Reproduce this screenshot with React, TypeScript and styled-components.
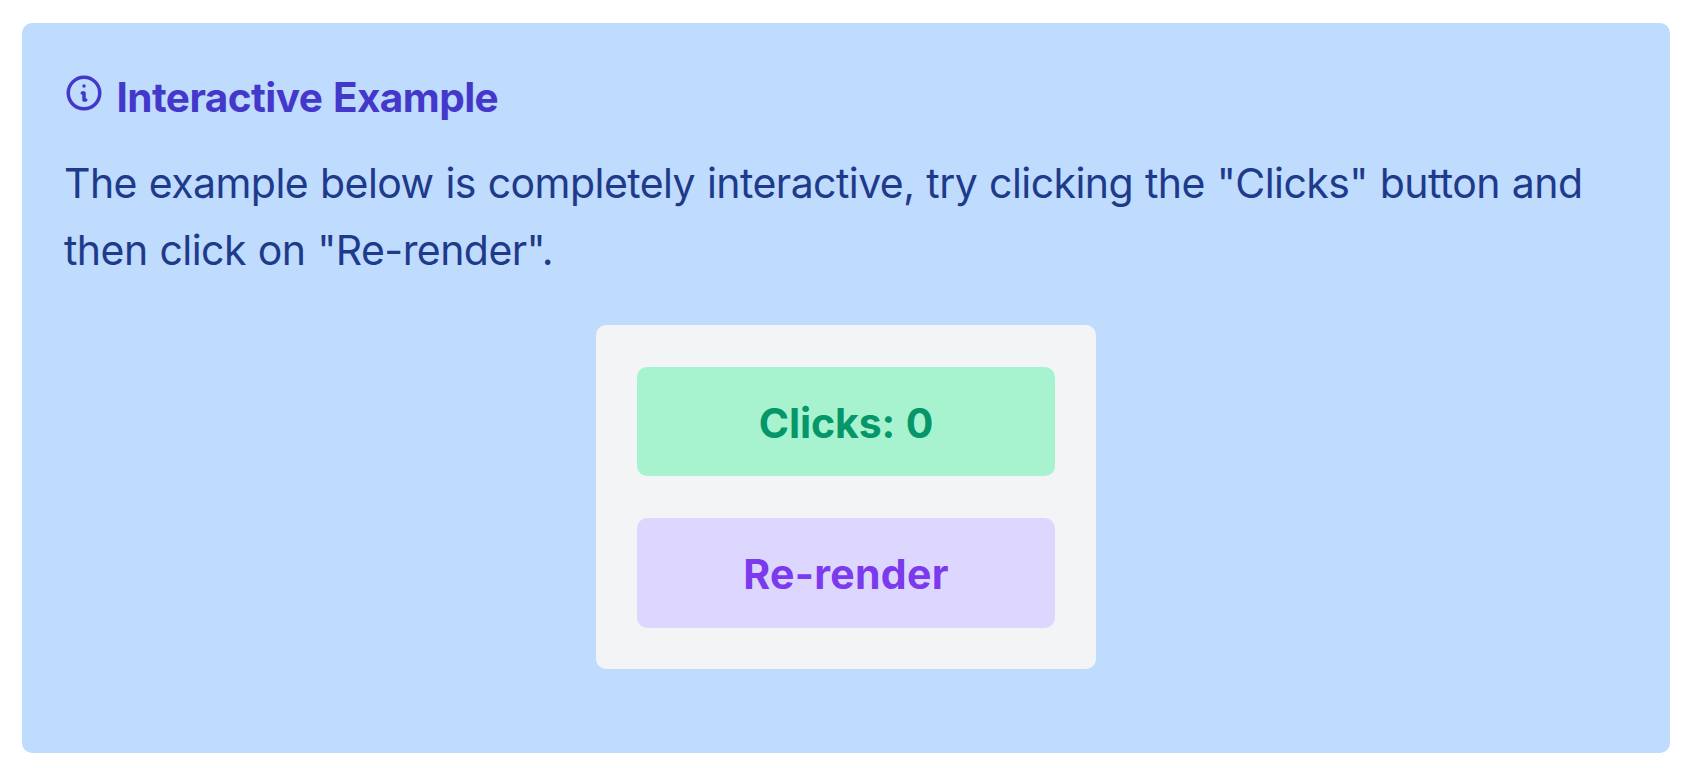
import React, { useState } from "react";
import styled, { createGlobalStyle } from "styled-components";

const GlobalStyle = createGlobalStyle`
  *, *::before, *::after { box-sizing: border-box; }
  body {
    margin: 0;
    background: #ffffff;
    font-family: Inter, "Liberation Sans", sans-serif;
  }
`;

const Page = styled.main`
  width: 1688px;
  height: 768px;
  padding: 23px 18px 15px 22px;
`;

const Callout = styled.section`
  height: 100%;
  padding: 48px 42px 0;
  border-radius: 10px;
  background: #bfdbfe;
`;

const Heading = styled.header`
  display: flex;
  align-items: flex-start;
  height: 79px;
  color: #4338ca;
`;

const InfoIcon = styled.svg`
  flex: none;
  width: 42px;
  height: 42px;
  margin: 0.5px 11.5px 0 -1px;
`;

const Title = styled.h2`
  margin: 0;
  font-size: 40.5px;
  font-weight: 700;
  line-height: 54px;
  letter-spacing: -0.55px;
  word-spacing: 1.5px;
  white-space: nowrap;
`;

const Description = styled.p`
  margin: 0 0 41px;
  color: #1e3a8a;
  font-size: 41px;
  line-height: 67px;
  letter-spacing: -0.56px;
  word-spacing: 0.9px;
  white-space: nowrap;
`;

const Demo = styled.div`
  display: flex;
  flex-direction: column;
  gap: 42px;
  width: 500px;
  height: 344px;
  margin-left: 532px;
  padding: 42px 41px 41px;
  border-radius: 10px;
  background: #f3f4f6;
`;

const Button = styled.button<{ $tone: "green" | "violet" }>`
  flex: none;
  height: ${(p) => (p.$tone === "green" ? 109 : 110)}px;
  padding: ${(p) => (p.$tone === "green" ? 3 : 1)}px 0 0;
  border: 0;
  border-radius: 10px;
  background: ${(p) => (p.$tone === "green" ? "#a7f3d0" : "#ddd6fe")};
  color: ${(p) => (p.$tone === "green" ? "#059669" : "#7c3aed")};
  font: 700 41px Inter, "Liberation Sans", sans-serif;
  letter-spacing: ${(p) => (p.$tone === "green" ? -0.1 : 0.3)}px;
  word-spacing: 1px;
  cursor: pointer;
`;

export default function App() {
  const [clicks, setClicks] = useState(0);
  const [, setRenders] = useState(0);

  return (
    <>
      <GlobalStyle />
      <Page>
        <Callout>
          <Heading>
            <InfoIcon viewBox="0 0 24 24" fill="none" stroke="currentColor" strokeWidth="2" strokeLinecap="round" strokeLinejoin="round" aria-hidden="true">
              <path d="M13 16h-1v-4h-1m1-4h.01M21 12a9 9 0 11-18 0 9 9 0 0118 0z" />
            </InfoIcon>
            <Title>Interactive Example</Title>
          </Heading>
          <Description>
            The example below is completely interactive, try clicking the "Clicks" button and
            <br />
            then click on "Re-render".
          </Description>
          <Demo>
            <Button $tone="green" onClick={() => setClicks((n) => n + 1)}>
              {`Clicks: ${clicks}`}
            </Button>
            <Button $tone="violet" onClick={() => setRenders((n) => n + 1)}>
              Re-render
            </Button>
          </Demo>
        </Callout>
      </Page>
    </>
  );
}
